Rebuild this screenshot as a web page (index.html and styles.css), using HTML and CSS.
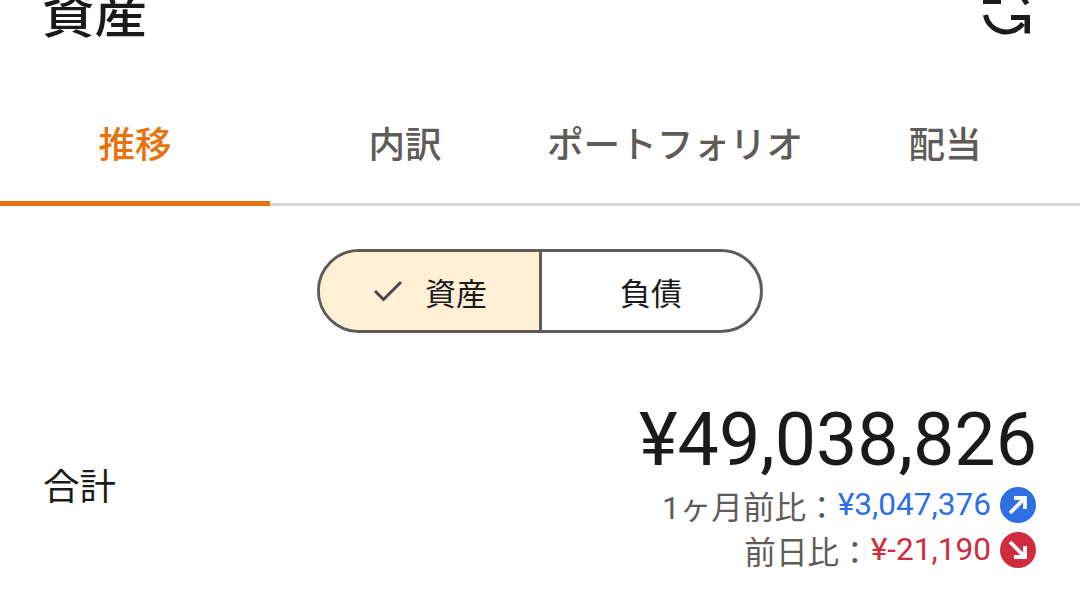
FILE: index.html
```html
<!DOCTYPE html>
<html lang="ja">
<head>
  <meta charset="UTF-8" />
  <meta name="viewport" content="width=device-width, initial-scale=1.0"/>
  <title>資産</title>
  <link rel="stylesheet" href="styles.css">
</head>
<body>
  <div class="header">
    <h1>資産</h1>
    <svg class="refresh" width="60" height="60" viewBox="975 -15 60 60">
      <path d="M985.500 15A21 21 0 0 0 1023 23.500" fill="none" stroke="#1a1a1a" stroke-width="5"/>
      <path d="M1011 15h19v18.500h-5.500V20H1011z" fill="#1a1a1a"/>
      <path d="M983 -6h18V4H983z" fill="#1a1a1a"/>
      <path d="M1022 -4L1027 4" fill="none" stroke="#1a1a1a" stroke-width="5"/>
    </svg>
  </div>

  <div class="tabs">
    <div class="tab activo">推移</div>
    <div class="tab">内訳</div>
    <div class="tab">ポートフォリオ</div>
    <div class="tab">配当</div>
  </div>

  <div class="selector-fila">
    <div class="selector">
      <div class="opcion marcada">
        <svg width="36" height="36" viewBox="0 0 36 36">
          <path d="M5 18l8.500 8.500L31 9" fill="none" stroke="#4b4553" stroke-width="3"/>
        </svg>
        <span>資産</span>
      </div>
      <div class="opcion">負債</div>
    </div>
  </div>

  <div class="total">
    <div class="total-label">合計</div>
    <div class="total-datos">
      <div class="monto">¥49,038,826</div>
      <div class="cambio">
        1ヶ月前比：<span class="azul">¥3,047,376</span>
        <svg class="flecha" width="36" height="36" viewBox="0 0 36 36">
          <circle cx="18" cy="18" r="18" fill="#2f6fe4"/>
          <path d="M10 26L24 12M14 11h11v11" fill="none" stroke="#fff" stroke-width="3.800"/>
        </svg>
      </div>
      <div class="cambio">
        前日比：<span class="rojo">¥-21,190</span>
        <svg class="flecha" width="36" height="36" viewBox="0 0 36 36">
          <circle cx="18" cy="18" r="18" fill="#cf2c40"/>
          <path d="M10 10L24 24M25 14v11H14" fill="none" stroke="#fff" stroke-width="3.800"/>
        </svg>
      </div>
    </div>
  </div>
</body>
</html>
```

FILE: styles.css
```css
html, body {
  margin: 0;
  padding: 0;
  height: 607px;
  overflow: hidden;
  background: #fff;
  font-family: Roboto, 'Noto Sans CJK JP', sans-serif;
  color: #1a1a1a;
}
.header {
  display: flex;
  justify-content: space-between;
  align-items: center;
  height: 80px;
  margin-top: -25px;
  padding: 0 45px 0 42px;
}
.header h1 {
  margin: 0;
  font-size: 52.500px;
  font-weight: 500;
  line-height: 80px;
}
.tabs {
  display: flex;
  height: 115px;
  margin-top: 33px;
  border-bottom: 3px solid #d8d6d6;
}
.tab {
  flex: 1;
  display: flex;
  align-items: center;
  justify-content: center;
  padding-bottom: 10px;
  box-sizing: border-box;
  height: 118px;
  font-size: 36.600px;
  font-weight: 500;
  color: #5f5b58;
}
.tab.activo {
  color: #e8730c;
  padding-bottom: 5px;
  border-bottom: 5px solid #e8730c;
}
.selector-fila {
  display: flex;
  justify-content: center;
  margin-top: 43px;
}
.selector {
  display: flex;
  width: 446px;
  height: 84px;
  box-sizing: border-box;
  border: 3px solid #5f5b58;
  border-radius: 42px;
  overflow: hidden;
  font-size: 31px;
}
.opcion {
  flex: 1;
  display: flex;
  align-items: center;
  justify-content: center;
  gap: 19px;
}
.opcion.marcada {
  flex: 0 0 222px;
  box-sizing: border-box;
  background: #ffefd5;
  border-right: 3px solid #5f5b58;
  padding-right: 2px;
}
.total {
  display: flex;
  justify-content: space-between;
  align-items: center;
  padding: 0 44px 0 43px;
  margin-top: 65px;
}
.total-label {
  font-size: 36.500px;
  margin-top: -2px;
}
.total-datos {
  display: flex;
  flex-direction: column;
  align-items: flex-end;
}
.monto {
  font-size: 73.500px;
  line-height: 84px;
  margin-right: -1px;
}
.cambio {
  display: flex;
  align-items: center;
  height: 45px;
  font-size: 31.600px;
  color: #5f5b58;
}
.azul { color: #2f6fe4; }
.rojo { color: #cf2c40; }
.flecha {
  margin-left: 9px;
}
```
